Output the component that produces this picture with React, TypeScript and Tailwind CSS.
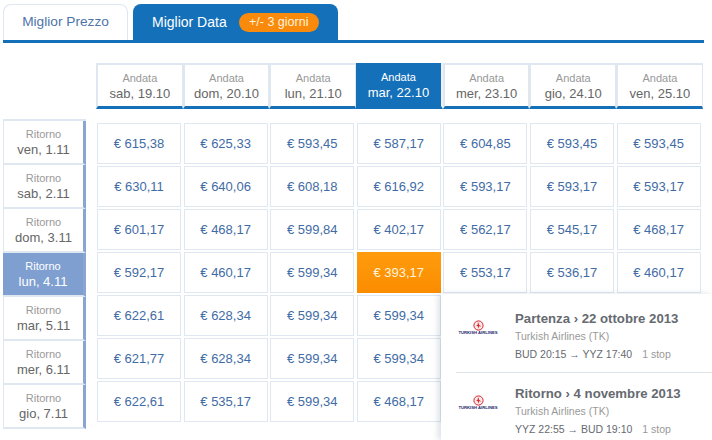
import React from 'react';

const departures = [
  ['sab, 19.10', false],
  ['dom, 20.10', false],
  ['lun, 21.10', false],
  ['mar, 22.10', true],
  ['mer, 23.10', false],
  ['gio, 24.10', false],
  ['ven, 25.10', false],
] as const;

const returns = ['ven, 1.11', 'sab, 2.11', 'dom, 3.11', 'lun, 4.11', 'mar, 5.11', 'mer, 6.11', 'gio, 7.11'];

const prices = [
  ['615,38', '625,33', '593,45', '587,17', '604,85', '593,45', '593,45'],
  ['630,11', '640,06', '608,18', '616,92', '593,17', '593,17', '593,17'],
  ['601,17', '468,17', '599,84', '402,17', '562,17', '545,17', '468,17'],
  ['592,17', '460,17', '599,34', '393,17', '553,17', '536,17', '460,17'],
  ['622,61', '628,34', '599,34', '599,34', '', '', ''],
  ['621,77', '628,34', '599,34', '599,34', '', '', ''],
  ['622,61', '535,17', '599,34', '468,17', '', '', ''],
];

const TurkishLogo = () => (
  <div className="w-[42px] mr-[2px] mt-[10px] flex flex-col items-center shrink-0">
    <svg width="11" height="11" viewBox="0 0 11 11">
      <circle cx="5.5" cy="5.5" r="4.6" fill="#fbeaea" stroke="#d8232a" strokeWidth="1" />
      <path d="M5 1.8 L6.2 5 L8.4 6.4 L6 6.2 L5.4 8.8 L4.6 6 L2.8 5.2 L4.6 5 Z" fill="#d8232a" />
    </svg>
    <span className="text-[4.2px] leading-[5px] font-bold text-[#1b2a6b] whitespace-nowrap -mt-px">TURKISH AIRLINES</span>
  </div>
);

const Flight = ({ title, route, last }: { title: string; route: string; last?: boolean }) => (
  <div className={`flex items-start pl-[1px] pt-[12px] h-[75px] ${last ? '' : 'border-b border-[#dfe3ea]'}`}>
    <TurkishLogo />
    <div className="ml-[14px]">
      <div className="text-[13.2px] leading-[18px] font-bold text-[#666a70] whitespace-nowrap">{title}</div>
      <div className="text-[10.5px] leading-[17px] text-[#999] whitespace-nowrap">Turkish Airlines (TK)</div>
      <div className="text-[10.5px] leading-[19px] text-[#666a70] whitespace-nowrap">
        {route}
        <span className="ml-[10px] text-[#999]">1 stop</span>
      </div>
    </div>
  </div>
);

export default function App() {
  return (
    <div className="relative w-[712px] h-[440px] overflow-hidden bg-white font-['Liberation_Sans',Arial,sans-serif]">
      {/* tabs */}
      <div className="flex items-end gap-[5px] pt-[4px] ml-[3px] mr-[8px] border-b-[3px] border-[#1470b9]">
        <div className="w-[125px] h-[36px] flex items-center justify-center bg-white border border-b-0 border-[#dfe7f0] rounded-t-[8px] text-[13.7px] text-[#4d74a8]">
          Miglior Prezzo
        </div>
        <div className="w-[205px] h-[36px] flex items-center pl-[19px] bg-[#1470b9] rounded-t-[8px] text-[14px] text-white">
          Miglior Data
          <span className="ml-[12px] h-[19px] w-[80px] flex items-center justify-center rounded-full bg-[#f98a0c] text-[12.5px] text-[#fff3dc]">
            +/- 3 giorni
          </span>
        </div>
      </div>

      {/* andata */}
      <div className="flex ml-[96px] mt-[20px]">
        {departures.map(([date, active]) => (
          <div
            key={date}
            className={`w-[86.7px] h-[46px] pt-[2px] flex flex-col items-center justify-center border-b-[3px] border-[#1470b9] ${
              active
                ? 'bg-[#1470b9] bg-clip-padding border-r-2 border-r-[#eef2f7]'
                : 'border-l-2 border-r border-t-2 border-l-[#dfe7f0] border-r-[#dfe7f0] border-t-[#dfe7f0]'
            }`}
          >
            <span className={`text-[11px] leading-[15px] ${active ? 'text-white' : 'text-[#999]'}`}>Andata</span>
            <span className={`text-[13px] leading-[16px] ${active ? 'text-white' : 'text-[#666]'}`}>{date}</span>
          </div>
        ))}
      </div>

      <div className="flex ml-[3px]">
        {/* ritorno */}
        <div className="w-[83px] mt-[10px] border-t-2 border-[#dfe7f0]">
          {returns.map((date) => {
            const active = date === 'lun, 4.11';
            return (
              <div
                key={date}
                className={`h-[44px] flex flex-col items-center justify-center border-b-2 border-[#dfe7f0] border-r-[3px] border-r-[#8aa5cf] ${
                  active ? 'bg-[#7f9fd0]' : 'border-l border-l-[#dfe7f0]'
                }`}
              >
                <span className={`text-[11px] leading-[15px] ${active ? 'text-white' : 'text-[#999]'}`}>Ritorno</span>
                <span className={`text-[13px] leading-[16px] ${active ? 'text-white' : 'text-[#666]'}`}>{date}</span>
              </div>
            );
          })}
        </div>

        {/* prices */}
        <div className="ml-[11px] mt-[14px] grid grid-cols-[repeat(7,84px)] auto-rows-[41px] gap-x-[2.6px] gap-y-[2px]">
          {prices.flatMap((row, r) =>
            row.map((price, c) => {
              if (!price) return <div key={`${r}-${c}`} />;
              const best = r === 3 && c === 3;
              return (
                <div
                  key={`${r}-${c}`}
                  className={`flex items-center justify-center text-[13px] ${
                    best
                      ? 'bg-gradient-to-b from-[#ff9c0e] to-[#fb8c00] text-[#fff3dc]'
                      : 'border-[1.5px] border-[#dfe7f0] text-[#3f6ca5]'
                  }`}
                >
                  € {price}
                </div>
              );
            })
          )}
        </div>
      </div>

      {/* flight details popover */}
      <div className="absolute left-[441px] top-[294px] w-[271px] h-[146px] bg-white pl-[15px] pt-[4px] shadow-[-3px_0_6px_rgba(120,130,150,0.25)]">
        <Flight title="Partenza › 22 ottobre 2013" route="BUD 20:15 → YYZ 17:40" />
        <Flight title="Ritorno › 4 novembre 2013" route="YYZ 22:55 → BUD 19:10" last />
      </div>
    </div>
  );
}
